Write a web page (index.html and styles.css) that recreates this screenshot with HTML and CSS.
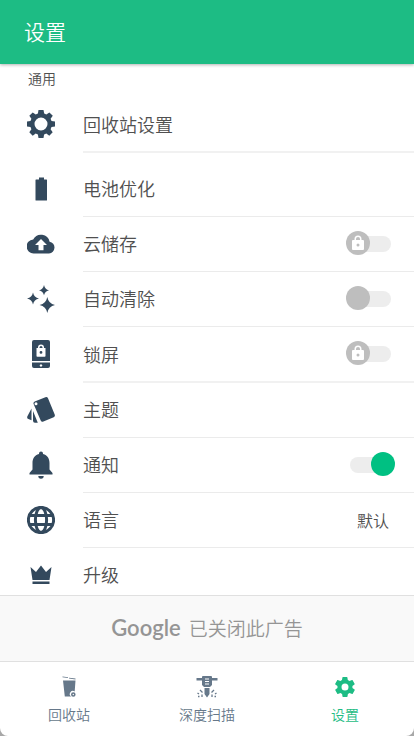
FILE: index.html
```html
<!DOCTYPE html>
<html lang="zh-CN">
<head>
<meta charset="utf-8">
<meta name="viewport" content="width=device-width, initial-scale=1">
<title>设置</title>
<link rel="stylesheet" href="styles.css">
</head>
<body>
<div class="app">
  <header class="topbar"><h1>设置</h1></header>
  <main class="settings">
    <h2 class="section">通用</h2>
    <ul class="list">
      <li class="row row-lead">
        <svg class="icon" viewBox="0 0 28 28" aria-hidden="true"><path fill-rule="evenodd" d="M11.500 0h5l.7 3.600 2.100.9 3.100-2.100 3.400 3.400-2.200 3 .9 2.200 3.500.6v4.800l-3.500.7-.9 2.100 2.100 3.100-3.400 3.400-3-2.200-2.200.9-.6 3.600h-5l-.6-3.600-2.200-.9-3 2.200-3.400-3.400 2.100-3.100-.9-2.100-3.500-.7v-4.800l3.500-.6.9-2.200-2.100-3 3.400-3.400 3 2.100 2.200-.9zM14 7.500a6.500 6.500 0 1 0 0 13 6.500 6.500 0 0 0 0-13z"/></svg>
        <a class="label" href="#recycle-settings">回收站设置</a>
      </li>
      <li class="row">
        <svg class="icon" viewBox="0 0 28 28" aria-hidden="true"><path d="M12 2.500h5v2h2.500q.5 0 .5.500v20q0 .5-.5.500h-10.500q-.5 0-.5-.5V5q0-.5.5-.5H12z"/></svg>
        <a class="label" href="#battery">电池优化</a>
      </li>
      <li class="row">
        <svg class="icon" viewBox="0 0 28 28" aria-hidden="true"><path fill-rule="evenodd" d="M22.600 11.700A8.800 8.800 0 0 0 6.200 9.400 7 7 0 0 0 7 23.400h15a5.900 5.900 0 0 0 .6-11.700zM16.500 15v5.300h-5V15H8l6-6 6 6z"/></svg>
        <label class="label" for="cloud">云储存</label>
        <span class="switch">
          <input type="checkbox" id="cloud">
          <svg class="lock" viewBox="0 0 12 15" aria-hidden="true"><path fill-rule="evenodd" d="M2.500 5V4a3.500 3.500 0 0 1 7 0v1H11q1 0 1 1v8q0 1-1 1H1q-1 0-1-1V6q0-1 1-1zM4 5h4V4a2 2 0 0 0-4 0zM6 8.400a1.500 1.500 0 1 0 0 3 1.500 1.500 0 0 0 0-3z"/></svg>
        </span>
      </li>
      <li class="row">
        <svg class="icon" viewBox="0 0 28 28" aria-hidden="true"><path d="M17 0q.9 4.400 5 5.300-4.100.9-5 5-.9-4.100-5-5Q16.100 4.400 17 0zM6 7.500q1 5 6 6-5 1-6 6-1-5-6-6 5-1 6-6zM20.300 12q1.200 6.700 7.700 8-6.500 1.300-7.700 8-1.200-6.700-7.700-8 6.500-1.300 7.700-8z"/></svg>
        <label class="label" for="autoclean">自动清除</label>
        <span class="switch"><input type="checkbox" id="autoclean"></span>
      </li>
      <li class="row row-thick">
        <svg class="icon" viewBox="0 0 28 28" aria-hidden="true"><path fill-rule="evenodd" d="M7 0h14q2 0 2 2v19H5V2q0-2 2-2zM11 8h-1.500V16q0 .8.800.8h7.400q.8 0 .8-.8V8H17V7.500a3 3 0 0 0-6 0zM12.500 8v-.5a1.500 1.500 0 0 1 3 0V8zM14 11a1.400 1.400 0 1 1 0 2.800 1.400 1.400 0 0 1 0-2.800zM5 22.500h18V26q0 2-2 2H7q-2 0-2-2zM14 24l-1.500 1.500L14 27l1.500-1.500z"/></svg>
        <label class="label" for="lockscreen">锁屏</label>
        <span class="switch">
          <input type="checkbox" id="lockscreen">
          <svg class="lock" viewBox="0 0 12 15" aria-hidden="true"><path fill-rule="evenodd" d="M2.500 5V4a3.500 3.500 0 0 1 7 0v1H11q1 0 1 1v8q0 1-1 1H1q-1 0-1-1V6q0-1 1-1zM4 5h4V4a2 2 0 0 0-4 0zM6 8.400a1.500 1.500 0 1 0 0 3 1.500 1.500 0 0 0 0-3z"/></svg>
        </span>
      </li>
      <li class="row">
        <svg class="icon" viewBox="0 0 28 28" aria-hidden="true"><path fill-rule="evenodd" d="M7.700 5.600 18.400 1.300q1.800-.7 2.600 1l6.700 16.300q.7 1.900-1 2.600l-10.300 4.400q-1.900.7-2.700-1L6.700 8.300q-.8-1.900 1-2.700zM9 6.300a1.500 1.500 0 1 0 0 3 1.500 1.500 0 0 0 0-3zM4.500 12.500v11.800l-3.100-1.200q-1.800-.8-1-2.800zM6 15l4.800 11.700H8q-2 0-2-2z"/></svg>
        <a class="label" href="#theme">主题</a>
      </li>
      <li class="row">
        <svg class="icon" viewBox="0 0 28 28" aria-hidden="true"><path d="M12 3V2.500a2 2 0 0 1 4 0V3c4.500 1.300 6.500 4.500 6.500 9v6.500l3 3.600v1.400h-23v-1.400l3-3.600V12c0-4.500 2-7.700 6.500-9zM11.300 25h5.400a2.700 2.700 0 0 1-5.400 0z"/></svg>
        <label class="label" for="notify">通知</label>
        <span class="switch"><input type="checkbox" id="notify" checked></span>
      </li>
      <li class="row">
        <svg class="icon icon-line" viewBox="0 0 28 28" aria-hidden="true"><circle cx="14" cy="14" r="12.600"/><ellipse cx="14" cy="14" rx="5.600" ry="12.600"/><path d="M2 9.500h24M2 18.500h24"/></svg>
        <label class="label" for="language">语言</label>
        <select class="value" id="language"><option>默认</option></select>
      </li>
      <li class="row">
        <svg class="icon" viewBox="0 0 28 28" aria-hidden="true"><path d="M3.500 6 9 11l5-6.500 5 6.500 5.500-5-2 13h-17zM5.500 20.500h17v2.500h-17z"/></svg>
        <a class="label" href="#upgrade">升级</a>
      </li>
    </ul>
  </main>
  <aside class="ad"><span class="brand">Google</span><span>已关闭此广告</span></aside>
  <nav class="tabs">
    <a class="tab" href="#bin">
      <svg class="tab-icon" viewBox="0 0 24 24" aria-hidden="true"><path d="M5.500 1.500 11 2.200v.9l-5.500-.8zM12 2.700l6.500.9v.9L12 3.500zM6 5.500h12.500l-.8 11a2.800 2.800 0 0 0-3.600 5H7.800z"/><circle cx="16.300" cy="19.500" r="1.500" fill="none" stroke="currentColor" stroke-width="1.600"/></svg>
      <span>回收站</span>
    </a>
    <a class="tab" href="#scan">
      <svg class="tab-icon" viewBox="0 0 24 24" aria-hidden="true"><path fill-rule="evenodd" d="M1.500 3H7V2q0-1 1-1h8q1 0 1 1v1h5.500v2.500H17V10l-2 2H9l-2-2V5.500H1.500zM10 3.500v1h4v-1zM10 6v1h4V6zM10 8.500v1h4v-1zM9.500 13h5v6L12 22.500 9.500 19z"/><path fill="none" stroke="currentColor" stroke-width="1.300" d="m5 15 2.500 2.500M2.500 18l1.500 1M7 19.500V22M3 21.500h1.500M19 15l-2.500 2.500M21.500 18l-1.500 1M17 19.500V22M21 21.500h-1.500"/></svg>
      <span>深度扫描</span>
    </a>
    <a class="tab tab-active" href="#settings" aria-current="page">
      <svg class="tab-icon" viewBox="0 0 24 24" aria-hidden="true"><path d="M19.400 13c.1-.7.100-1.300 0-2l2.100-1.600c.2-.2.200-.4.100-.6l-2-3.500c-.1-.2-.4-.3-.6-.2l-2.500 1c-.5-.4-1.100-.7-1.700-1l-.4-2.600c0-.2-.2-.4-.5-.4h-4c-.2 0-.4.200-.5.400L9 5.100c-.6.300-1.200.6-1.700 1l-2.500-1c-.2-.1-.5 0-.6.2l-2 3.500c-.1.200-.1.400.1.600L4.500 11c-.1.700-.1 1.300 0 2l-2.100 1.600c-.2.200-.2.400-.1.600l2 3.500c.1.200.4.300.6.200l2.500-1c.5.400 1.100.7 1.700 1l.4 2.600c0 .2.200.4.500.4h4c.2 0 .4-.2.500-.4l.4-2.600c.6-.3 1.200-.6 1.700-1l2.500 1c.2.100.5 0 .6-.2l2-3.500c.1-.2.100-.4-.1-.6zM12 15.500a3.500 3.500 0 1 1 0-7 3.500 3.500 0 0 1 0 7z"/></svg>
      <span>设置</span>
    </a>
  </nav>
</div>
</body>
</html>
```
FILE: styles.css
```css
* { box-sizing: border-box; }

body {
  margin: 0;
  background: #a8a8a8;
  color: #505050;
  font-family: "Noto Sans CJK SC", sans-serif;
  font-weight: 350;
}

a { color: inherit; text-decoration: none; }

.app {
  display: flex;
  flex-direction: column;
  height: 100vh;
  overflow: hidden;
  background: #fff;
  border-radius: 0 0 8px 8px;
}

.topbar {
  display: flex;
  flex: none;
  align-items: center;
  height: 64px;
  padding: 0 24px 2px;
  background: #1dbc84;
  color: #fff;
  box-shadow: 0 1px 3px rgba(0, 0, 0, 0.3);
}

.topbar h1 { margin: 0; font-size: 21px; font-weight: 350; }

.settings { flex: 1; min-height: 0; overflow: hidden; }

.section {
  margin: 0;
  padding: 4px 28px 9px;
  font-size: 14px;
  line-height: 20px;
  font-weight: 350;
}

.list { margin: 0; padding: 0; list-style: none; }

.row {
  display: grid;
  grid-template-columns: 83px 1fr auto;
  align-items: center;
  height: 55px;
  padding-bottom: 2px;
  background: linear-gradient(#ebebeb, #ebebeb) 83px 100% / 100% 1px no-repeat;
}

.row-lead,
.row-thick { height: 56px; background-size: 100% 2px; background-image: linear-gradient(#f1f1f1, #f1f1f1); }

.row-lead { margin-bottom: 9px; }

.icon { width: 28px; height: 28px; margin-left: 27px; fill: #33495d; }

.icon-line { fill: none; stroke: #33495d; stroke-width: 3; }

.label { padding-bottom: 1px; font-size: 18px; line-height: 28px; }

.switch { position: relative; display: flex; margin: 0 19px 2px 0; }

.switch input {
  appearance: none;
  position: relative;
  width: 49px;
  height: 24px;
  margin: 0;
}

.switch input::before {
  content: "";
  position: absolute;
  inset: 5px 4px 3px;
  border-radius: 8px;
  background: #ededed;
}

.switch input::after {
  content: "";
  position: absolute;
  top: 0;
  left: 0;
  width: 24px;
  height: 24px;
  border-radius: 50%;
  background: #bebebe;
}

.switch input:checked::after { left: 25px; background: #00c082; }

.lock {
  position: absolute;
  top: 4px;
  left: 6px;
  width: 12px;
  height: 15px;
  fill: #fff;
  pointer-events: none;
}

.value {
  appearance: none;
  margin-right: 24px;
  padding: 0;
  border: 0;
  background: none;
  color: inherit;
  font: inherit;
  font-size: 16px;
}

.ad {
  display: flex;
  flex: none;
  align-items: center;
  justify-content: center;
  gap: 8px;
  height: 67px;
  padding-bottom: 2px;
  border-top: 1px solid #e0e0e0;
  border-bottom: 1px solid #e0e0e0;
  background: #f9f9f9;
  color: #959595;
  font-size: 19px;
}

.brand { font-family: Lato, sans-serif; font-size: 22px; font-weight: 600; }

.tabs { display: grid; flex: none; grid-template-columns: repeat(3, 1fr); height: 74px; }

.tab {
  display: flex;
  flex-direction: column;
  align-items: center;
  gap: 5px;
  padding-top: 13px;
  color: #66788a;
  font-size: 14px;
  line-height: 20px;
}

.tab-icon { width: 24px; height: 24px; fill: currentColor; }

.tab-active { color: #1dbc84; }
```
